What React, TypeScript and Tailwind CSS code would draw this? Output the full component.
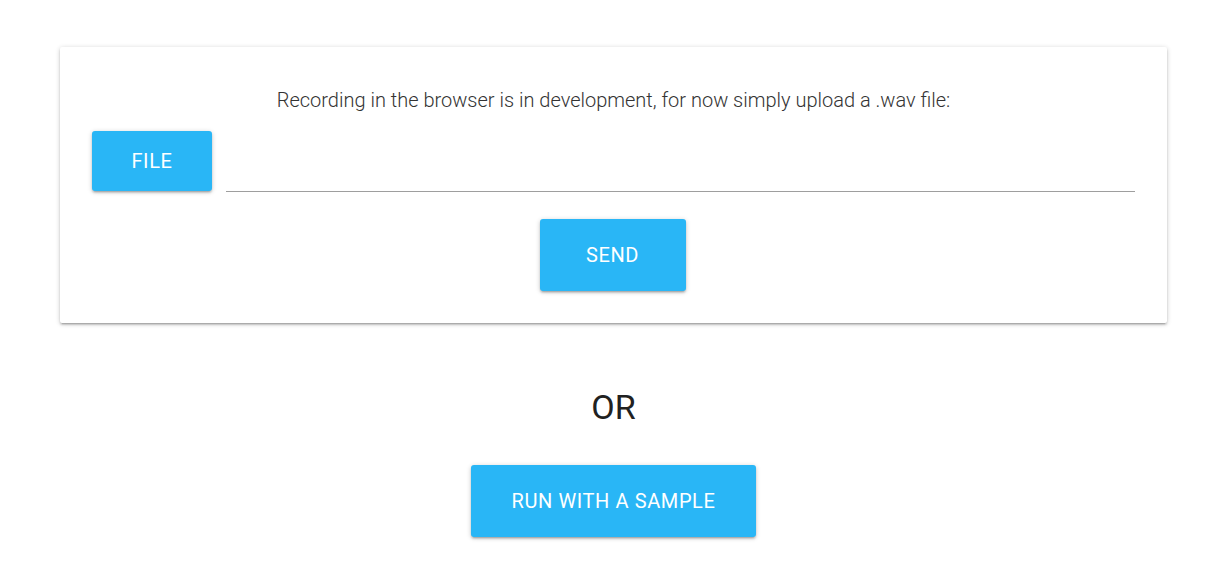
import React from 'react';

const btn =
  "flex items-center justify-center rounded-[3px] bg-[#29b6f6] text-white text-[20px] tracking-[0.6px] shadow-[0_2px_2px_0_rgba(0,0,0,0.14),0_3px_1px_-2px_rgba(0,0,0,0.12),0_1px_5px_0_rgba(0,0,0,0.2)]";

export default function App() {
  return (
    <div className="min-h-[573px] bg-white font-['Roboto','Liberation_Sans',sans-serif] pt-[47px]">
      <div className="ml-[60px] w-[1107px]">
        {/* Upload card */}
        <div className="h-[276px] rounded-[2px] bg-white px-8 pt-[39px] shadow-[0_2px_2px_0_rgba(0,0,0,0.14),0_3px_1px_-2px_rgba(0,0,0,0.12),0_1px_5px_0_rgba(0,0,0,0.2)]">
          <p className="text-center text-[20px] leading-[28px] font-light text-[#333]">
            Recording in the browser is in development, for now simply upload a .wav file:
          </p>
          <div className="mt-[17px] flex items-start gap-[14px]">
            <button className={`${btn} h-[60px] w-[120px]`}>FILE</button>
            <div className="flex-1 border-b border-[#9e9e9e] h-[61px]" />
          </div>
          <div className="mt-[27px] flex justify-center">
            <button className={`${btn} h-[72px] w-[146px] -translate-x-px`}>SEND</button>
          </div>
        </div>

        <div className="mt-[64px] text-center text-[34px] leading-[40px] text-[#212121]">OR</div>

        <div className="mt-[38px] flex justify-center">
          <button className={`${btn} h-[72px] w-[285px]`}>RUN WITH A SAMPLE</button>
        </div>
      </div>
    </div>
  );
}
